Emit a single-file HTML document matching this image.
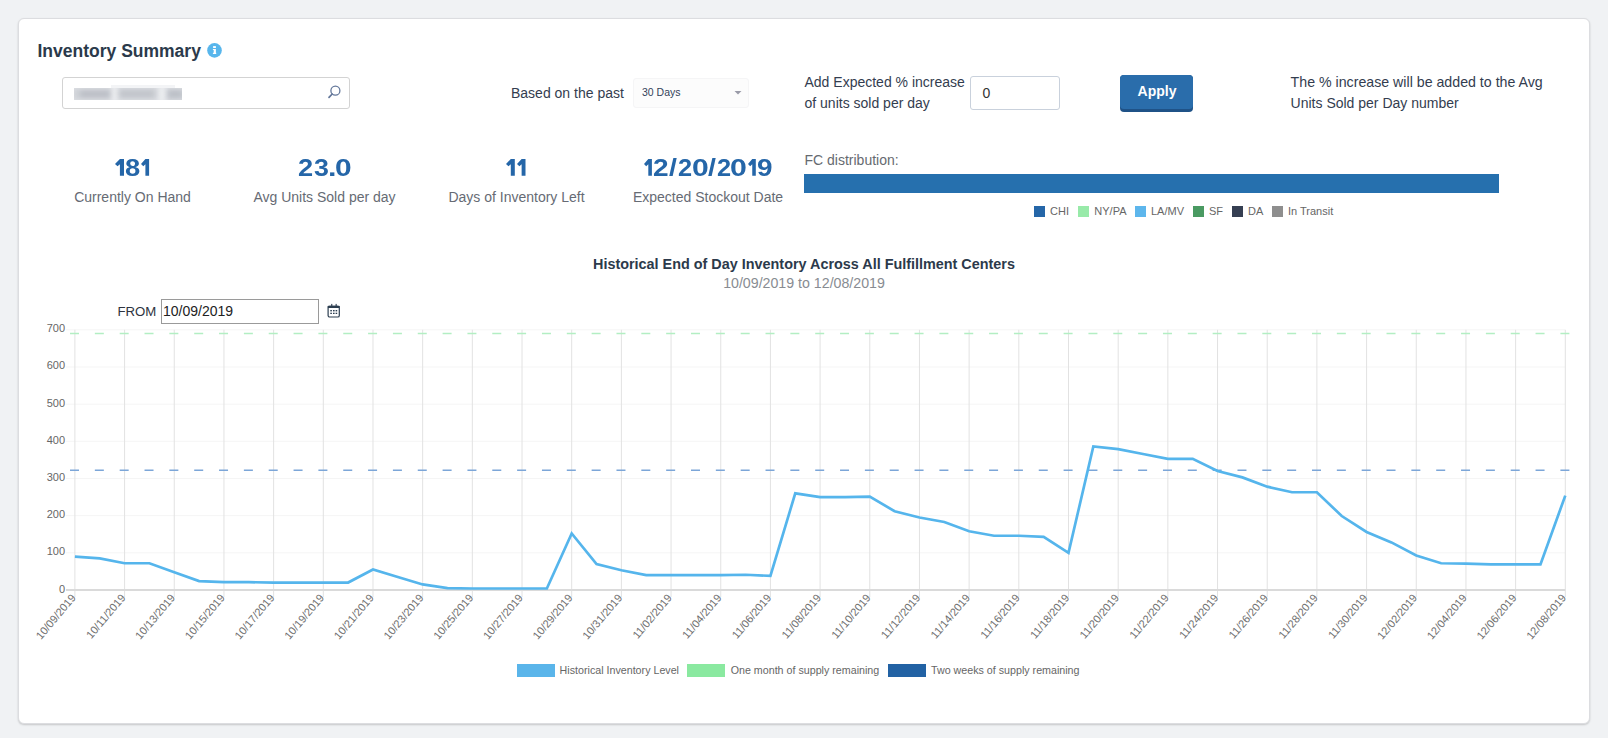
<!DOCTYPE html>
<html><head><meta charset="utf-8"><style>
html,body{margin:0;padding:0;}
body{width:1608px;height:738px;overflow:hidden;background:#f0f2f4;font-family:"Liberation Sans",sans-serif;position:relative;}
.card{position:absolute;left:18px;top:18px;width:1570px;height:704px;background:#fff;border:1px solid #dcdde0;border-radius:6px;box-shadow:0 1px 2px rgba(0,0,0,0.18);}
.t{position:absolute;white-space:nowrap;}
</style></head><body>
<div class="card"></div>
<div class="t" style="left:37.50px;top:43.19px;font-size:17.5px;line-height:17.5px;color:#2b3a4b;font-weight:bold;">Inventory Summary</div>
<svg style="position:absolute;left:207px;top:42.8px" width="15" height="15"><circle cx="7.5" cy="7.4" r="7.3" fill="#58b6ec"/><g fill="#fff"><rect x="6.1" y="3.1" width="2.8" height="1.9"/><path d="M5.9 5.9h3v3.9h0.3v1.3H5.9V9.8h0.8V7.0h-0.8z"/></g></svg><div style="position:absolute;left:62px;top:77px;width:286px;height:30px;border:1px solid #d3d3d3;border-radius:3px;background:#fff;"></div><div style="position:absolute;left:74px;top:88px;width:108px;height:12px;overflow:hidden;background:#e2e4e8;"><div style="position:absolute;left:-6px;top:-6px;width:120px;height:24px;filter:blur(2.5px);"><span style="position:absolute;left:4px;top:6px;width:40px;height:12px;background:#d0d3d8"></span><span style="position:absolute;left:12px;top:8px;width:30px;height:8px;background:#bdc0c7"></span><span style="position:absolute;left:48px;top:5px;width:42px;height:13px;background:#d2d5da"></span><span style="position:absolute;left:52px;top:8px;width:34px;height:8px;background:#c2c5cb"></span><span style="position:absolute;left:98px;top:6px;width:22px;height:13px;background:#d0d3d8"></span><span style="position:absolute;left:100px;top:8px;width:14px;height:8px;background:#bcc0c7"></span><span style="position:absolute;left:44px;top:4px;width:5px;height:16px;background:#f0f1f3"></span><span style="position:absolute;left:91px;top:4px;width:6px;height:16px;background:#eceef0"></span></div></div><div style="position:absolute;left:111px;top:85px;width:64px;height:3px;overflow:hidden;background:#f3f4f6;filter:blur(0.6px)"></div><svg style="position:absolute;left:326px;top:83px" width="18" height="18"><circle cx="9.4" cy="7.7" r="4.5" fill="none" stroke="#63779a" stroke-width="1.3"/><path d="M6.2 11 L3 14.4" stroke="#63779a" stroke-width="1.7" stroke-linecap="round"/></svg><div class="t" style="left:511.00px;top:85.95px;font-size:14px;line-height:14px;color:#333d4f;font-weight:normal;">Based on the past</div>
<div style="position:absolute;left:633px;top:78px;width:114px;height:28px;border:1px solid #f5f5f6;border-radius:3px;background:#fcfcfc;"></div><div class="t" style="left:642.00px;top:86.81px;font-size:10.5px;line-height:10.5px;color:#33435a;font-weight:normal;">30 Days</div>
<svg style="position:absolute;left:733px;top:90px" width="10" height="6"><path d="M1.5 1 L8.5 1 L5 4.5z" fill="#9a9ba8"/></svg><div class="t" style="left:804.50px;top:75.15px;font-size:14px;line-height:14px;color:#333d4f;font-weight:normal;">Add Expected % increase</div>
<div class="t" style="left:804.50px;top:95.65px;font-size:14px;line-height:14px;color:#333d4f;font-weight:normal;">of units sold per day</div>
<div style="position:absolute;left:970px;top:76px;width:88px;height:32px;border:1px solid #c9d1dc;border-radius:3px;background:#fff;"></div><div class="t" style="left:982.40px;top:86.15px;font-size:14px;line-height:14px;color:#333;font-weight:normal;">0</div>
<div style="position:absolute;left:1120px;top:75px;width:73px;height:37px;border-radius:4px;background:#1f5287;"></div><div style="position:absolute;left:1120px;top:75px;width:73px;height:34px;border-radius:4px;background:#2a6dab;"></div><div class="t" style="left:657.00px;width:1000px;text-align:center;top:84.25px;font-size:14px;line-height:14px;color:#ffffff;font-weight:bold;">Apply</div>
<div class="t" style="left:1290.60px;top:74.98px;font-size:14.2px;line-height:14.2px;color:#333d4f;font-weight:normal;">The % increase will be added to the Avg</div>
<div class="t" style="left:1290.60px;top:95.65px;font-size:14px;line-height:14px;color:#333d4f;font-weight:normal;">Units Sold per Day number</div>
<svg style="position:absolute;left:115.00px;top:159.00px" width="9.50" height="17.30"><polygon points="4.91,0 9.00,0 9.00,16.8 4.91,16.8 4.91,5.3 2.52,7.2 0,5.0" fill="#2566a8"/></svg><div class="t" style="left:125.03px;top:156.38px;font-size:24px;line-height:24px;font-weight:bold;color:#2566a8;transform-origin:0 0;transform:scaleX(1.139)">8</div><svg style="position:absolute;left:141.00px;top:159.00px" width="8.60" height="17.30"><polygon points="4.41,0 8.10,0 8.10,16.8 4.41,16.8 4.41,5.3 2.27,7.2 0,5.0" fill="#2566a8"/></svg>
<div class="t" style="left:298.26px;top:156.38px;font-size:24px;line-height:24px;font-weight:bold;color:#2566a8;transform-origin:0 0;transform:scaleX(1.134)">2</div><div class="t" style="left:313.59px;top:156.38px;font-size:24px;line-height:24px;font-weight:bold;color:#2566a8;transform-origin:0 0;transform:scaleX(1.115)">3</div><div class="t" style="left:327.53px;top:156.38px;font-size:24px;line-height:24px;font-weight:bold;color:#2566a8;transform-origin:0 0;transform:scaleX(1.270)">.</div><div class="t" style="left:334.62px;top:156.38px;font-size:24px;line-height:24px;font-weight:bold;color:#2566a8;transform-origin:0 0;transform:scaleX(1.244)">0</div>
<svg style="position:absolute;left:506.10px;top:159.00px" width="9.30" height="17.30"><polygon points="4.80,0 8.80,0 8.80,16.8 4.80,16.8 4.80,5.3 2.46,7.2 0,5.0" fill="#2566a8"/></svg><svg style="position:absolute;left:516.60px;top:159.00px" width="9.00" height="17.30"><polygon points="4.63,0 8.50,0 8.50,16.8 4.63,16.8 4.63,5.3 2.38,7.2 0,5.0" fill="#2566a8"/></svg>
<svg style="position:absolute;left:643.90px;top:159.00px" width="8.40" height="17.30"><polygon points="4.31,0 7.90,0 7.90,16.8 4.31,16.8 4.31,5.3 2.21,7.2 0,5.0" fill="#2566a8"/></svg><div class="t" style="left:653.43px;top:156.38px;font-size:24px;line-height:24px;font-weight:bold;color:#2566a8;transform-origin:0 0;transform:scaleX(1.168)">2</div><div class="t" style="left:668.92px;top:156.38px;font-size:24px;line-height:24px;font-weight:bold;color:#2566a8;transform-origin:0 0;transform:scaleX(1.194)">/</div><div class="t" style="left:677.82px;top:156.38px;font-size:24px;line-height:24px;font-weight:bold;color:#2566a8;transform-origin:0 0;transform:scaleX(1.056)">2</div><div class="t" style="left:691.51px;top:156.38px;font-size:24px;line-height:24px;font-weight:bold;color:#2566a8;transform-origin:0 0;transform:scaleX(1.253)">0</div><div class="t" style="left:708.02px;top:156.38px;font-size:24px;line-height:24px;font-weight:bold;color:#2566a8;transform-origin:0 0;transform:scaleX(1.194)">/</div><div class="t" style="left:716.62px;top:156.38px;font-size:24px;line-height:24px;font-weight:bold;color:#2566a8;transform-origin:0 0;transform:scaleX(1.056)">2</div><div class="t" style="left:730.20px;top:156.38px;font-size:24px;line-height:24px;font-weight:bold;color:#2566a8;transform-origin:0 0;transform:scaleX(1.262)">0</div><svg style="position:absolute;left:748.00px;top:159.00px" width="8.30" height="17.30"><polygon points="4.25,0 7.80,0 7.80,16.8 4.25,16.8 4.25,5.3 2.18,7.2 0,5.0" fill="#2566a8"/></svg><div class="t" style="left:757.43px;top:156.38px;font-size:24px;line-height:24px;font-weight:bold;color:#2566a8;transform-origin:0 0;transform:scaleX(1.161)">9</div>
<div class="t" style="left:-367.50px;width:1000px;text-align:center;top:190.35px;font-size:14px;line-height:14px;color:#666b74;font-weight:normal;">Currently On Hand</div>
<div class="t" style="left:-175.50px;width:1000px;text-align:center;top:190.35px;font-size:14px;line-height:14px;color:#666b74;font-weight:normal;">Avg Units Sold per day</div>
<div class="t" style="left:16.50px;width:1000px;text-align:center;top:190.35px;font-size:14px;line-height:14px;color:#666b74;font-weight:normal;">Days of Inventory Left</div>
<div class="t" style="left:208.00px;width:1000px;text-align:center;top:190.35px;font-size:14px;line-height:14px;color:#666b74;font-weight:normal;">Expected Stockout Date</div>
<div class="t" style="left:804.50px;top:153.15px;font-size:14px;line-height:14px;color:#666a70;font-weight:normal;">FC distribution:</div>
<div style="position:absolute;left:804px;top:174px;width:695px;height:19px;background:#2670ae;"></div><div style="position:absolute;left:1034px;top:206px;width:11px;height:11px;background:#2566a8;"></div><div class="t" style="left:1050.00px;top:205.69px;font-size:11px;line-height:11px;color:#666;font-weight:normal;">CHI</div>
<div style="position:absolute;left:1078px;top:206px;width:11px;height:11px;background:#98eaa9;"></div><div class="t" style="left:1094.30px;top:205.69px;font-size:11px;line-height:11px;color:#666;font-weight:normal;">NY/PA</div>
<div style="position:absolute;left:1135px;top:206px;width:11px;height:11px;background:#5db6ec;"></div><div class="t" style="left:1151.00px;top:205.69px;font-size:11px;line-height:11px;color:#666;font-weight:normal;">LA/MV</div>
<div style="position:absolute;left:1192.5px;top:206px;width:11px;height:11px;background:#4a9a62;"></div><div class="t" style="left:1209.00px;top:205.69px;font-size:11px;line-height:11px;color:#666;font-weight:normal;">SF</div>
<div style="position:absolute;left:1231.5px;top:206px;width:11px;height:11px;background:#353f52;"></div><div class="t" style="left:1248.00px;top:205.69px;font-size:11px;line-height:11px;color:#666;font-weight:normal;">DA</div>
<div style="position:absolute;left:1271.7px;top:206px;width:11px;height:11px;background:#8e8e8e;"></div><div class="t" style="left:1288.00px;top:205.69px;font-size:11px;line-height:11px;color:#666;font-weight:normal;">In Transit</div>
<div class="t" style="left:304.00px;width:1000px;text-align:center;top:257.11px;font-size:14.4px;line-height:14.4px;color:#2c3a4b;font-weight:bold;">Historical End of Day Inventory Across All Fulfillment Centers</div>
<div class="t" style="left:304.00px;width:1000px;text-align:center;top:276.48px;font-size:14.2px;line-height:14.2px;color:#888c92;font-weight:normal;">10/09/2019 to 12/08/2019</div>
<div class="t" style="left:117.50px;top:305.33px;font-size:13.2px;line-height:13.2px;color:#2d3340;font-weight:normal;">FROM</div>
<div style="position:absolute;left:161px;top:299px;width:156px;height:23px;border:1px solid #9a9a9a;background:#fff;"></div><div class="t" style="left:163.00px;top:304.15px;font-size:14px;line-height:14px;color:#222;font-weight:normal;">10/09/2019</div>
<svg style="position:absolute;left:326px;top:302px" width="16" height="17"><rect x="2.1" y="4.4" width="11.2" height="10.6" rx="1.6" fill="none" stroke="#2c3e50" stroke-width="1.2"/><rect x="1.5" y="3.8" width="12.4" height="2.3" rx="1" fill="#2c3e50"/><rect x="5.2" y="1.9" width="1.1" height="2.4" fill="#2c3e50"/><rect x="9.6" y="1.9" width="1.1" height="2.4" fill="#2c3e50"/><g fill="#2c3e50"><rect x="4.3" y="8.0" width="1.6" height="1.4"/><rect x="7.0" y="8.0" width="1.6" height="1.4"/><rect x="9.6" y="8.0" width="1.6" height="1.4"/><rect x="4.3" y="10.7" width="1.6" height="1.3"/><rect x="7.0" y="10.7" width="1.6" height="1.3"/><rect x="9.6" y="10.7" width="1.6" height="1.3"/></g></svg><svg style="position:absolute;left:0;top:0" width="1608" height="738" font-family="Liberation Sans, sans-serif"><line x1="66" y1="552.83" x2="1565.30" y2="552.83" stroke="#f5f5f5" stroke-width="1"/><line x1="66" y1="515.66" x2="1565.30" y2="515.66" stroke="#f5f5f5" stroke-width="1"/><line x1="66" y1="478.49" x2="1565.30" y2="478.49" stroke="#f5f5f5" stroke-width="1"/><line x1="66" y1="441.32" x2="1565.30" y2="441.32" stroke="#f5f5f5" stroke-width="1"/><line x1="66" y1="404.15" x2="1565.30" y2="404.15" stroke="#f5f5f5" stroke-width="1"/><line x1="66" y1="366.98" x2="1565.30" y2="366.98" stroke="#f5f5f5" stroke-width="1"/><line x1="66" y1="329.81" x2="1565.30" y2="329.81" stroke="#f5f5f5" stroke-width="1"/><line x1="74.90" y1="329.81" x2="74.90" y2="597" stroke="#e2e2e2" stroke-width="1"/><line x1="124.58" y1="329.81" x2="124.58" y2="597" stroke="#e2e2e2" stroke-width="1"/><line x1="174.26" y1="329.81" x2="174.26" y2="597" stroke="#e2e2e2" stroke-width="1"/><line x1="223.94" y1="329.81" x2="223.94" y2="597" stroke="#e2e2e2" stroke-width="1"/><line x1="273.62" y1="329.81" x2="273.62" y2="597" stroke="#e2e2e2" stroke-width="1"/><line x1="323.30" y1="329.81" x2="323.30" y2="597" stroke="#e2e2e2" stroke-width="1"/><line x1="372.98" y1="329.81" x2="372.98" y2="597" stroke="#e2e2e2" stroke-width="1"/><line x1="422.66" y1="329.81" x2="422.66" y2="597" stroke="#e2e2e2" stroke-width="1"/><line x1="472.34" y1="329.81" x2="472.34" y2="597" stroke="#e2e2e2" stroke-width="1"/><line x1="522.02" y1="329.81" x2="522.02" y2="597" stroke="#e2e2e2" stroke-width="1"/><line x1="571.70" y1="329.81" x2="571.70" y2="597" stroke="#e2e2e2" stroke-width="1"/><line x1="621.38" y1="329.81" x2="621.38" y2="597" stroke="#e2e2e2" stroke-width="1"/><line x1="671.06" y1="329.81" x2="671.06" y2="597" stroke="#e2e2e2" stroke-width="1"/><line x1="720.74" y1="329.81" x2="720.74" y2="597" stroke="#e2e2e2" stroke-width="1"/><line x1="770.42" y1="329.81" x2="770.42" y2="597" stroke="#e2e2e2" stroke-width="1"/><line x1="820.10" y1="329.81" x2="820.10" y2="597" stroke="#e2e2e2" stroke-width="1"/><line x1="869.78" y1="329.81" x2="869.78" y2="597" stroke="#e2e2e2" stroke-width="1"/><line x1="919.46" y1="329.81" x2="919.46" y2="597" stroke="#e2e2e2" stroke-width="1"/><line x1="969.14" y1="329.81" x2="969.14" y2="597" stroke="#e2e2e2" stroke-width="1"/><line x1="1018.82" y1="329.81" x2="1018.82" y2="597" stroke="#e2e2e2" stroke-width="1"/><line x1="1068.50" y1="329.81" x2="1068.50" y2="597" stroke="#e2e2e2" stroke-width="1"/><line x1="1118.18" y1="329.81" x2="1118.18" y2="597" stroke="#e2e2e2" stroke-width="1"/><line x1="1167.86" y1="329.81" x2="1167.86" y2="597" stroke="#e2e2e2" stroke-width="1"/><line x1="1217.54" y1="329.81" x2="1217.54" y2="597" stroke="#e2e2e2" stroke-width="1"/><line x1="1267.22" y1="329.81" x2="1267.22" y2="597" stroke="#e2e2e2" stroke-width="1"/><line x1="1316.90" y1="329.81" x2="1316.90" y2="597" stroke="#e2e2e2" stroke-width="1"/><line x1="1366.58" y1="329.81" x2="1366.58" y2="597" stroke="#e2e2e2" stroke-width="1"/><line x1="1416.26" y1="329.81" x2="1416.26" y2="597" stroke="#e2e2e2" stroke-width="1"/><line x1="1465.94" y1="329.81" x2="1465.94" y2="597" stroke="#e2e2e2" stroke-width="1"/><line x1="1515.62" y1="329.81" x2="1515.62" y2="597" stroke="#e2e2e2" stroke-width="1"/><line x1="1565.30" y1="329.81" x2="1565.30" y2="597" stroke="#e2e2e2" stroke-width="1"/><line x1="66" y1="590.0" x2="1565.30" y2="590.0" stroke="#dadada" stroke-width="2"/><text x="65" y="592.50" text-anchor="end" font-size="11" fill="#666">0</text><text x="65" y="555.33" text-anchor="end" font-size="11" fill="#666">100</text><text x="65" y="518.16" text-anchor="end" font-size="11" fill="#666">200</text><text x="65" y="480.99" text-anchor="end" font-size="11" fill="#666">300</text><text x="65" y="443.82" text-anchor="end" font-size="11" fill="#666">400</text><text x="65" y="406.65" text-anchor="end" font-size="11" fill="#666">500</text><text x="65" y="369.48" text-anchor="end" font-size="11" fill="#666">600</text><text x="65" y="332.31" text-anchor="end" font-size="11" fill="#666">700</text><text transform="translate(76.40,598) rotate(-50)" text-anchor="end" font-size="11" fill="#6e6e6e">10/09/2019</text><text transform="translate(126.08,598) rotate(-50)" text-anchor="end" font-size="11" fill="#6e6e6e">10/11/2019</text><text transform="translate(175.76,598) rotate(-50)" text-anchor="end" font-size="11" fill="#6e6e6e">10/13/2019</text><text transform="translate(225.44,598) rotate(-50)" text-anchor="end" font-size="11" fill="#6e6e6e">10/15/2019</text><text transform="translate(275.12,598) rotate(-50)" text-anchor="end" font-size="11" fill="#6e6e6e">10/17/2019</text><text transform="translate(324.80,598) rotate(-50)" text-anchor="end" font-size="11" fill="#6e6e6e">10/19/2019</text><text transform="translate(374.48,598) rotate(-50)" text-anchor="end" font-size="11" fill="#6e6e6e">10/21/2019</text><text transform="translate(424.16,598) rotate(-50)" text-anchor="end" font-size="11" fill="#6e6e6e">10/23/2019</text><text transform="translate(473.84,598) rotate(-50)" text-anchor="end" font-size="11" fill="#6e6e6e">10/25/2019</text><text transform="translate(523.52,598) rotate(-50)" text-anchor="end" font-size="11" fill="#6e6e6e">10/27/2019</text><text transform="translate(573.20,598) rotate(-50)" text-anchor="end" font-size="11" fill="#6e6e6e">10/29/2019</text><text transform="translate(622.88,598) rotate(-50)" text-anchor="end" font-size="11" fill="#6e6e6e">10/31/2019</text><text transform="translate(672.56,598) rotate(-50)" text-anchor="end" font-size="11" fill="#6e6e6e">11/02/2019</text><text transform="translate(722.24,598) rotate(-50)" text-anchor="end" font-size="11" fill="#6e6e6e">11/04/2019</text><text transform="translate(771.92,598) rotate(-50)" text-anchor="end" font-size="11" fill="#6e6e6e">11/06/2019</text><text transform="translate(821.60,598) rotate(-50)" text-anchor="end" font-size="11" fill="#6e6e6e">11/08/2019</text><text transform="translate(871.28,598) rotate(-50)" text-anchor="end" font-size="11" fill="#6e6e6e">11/10/2019</text><text transform="translate(920.96,598) rotate(-50)" text-anchor="end" font-size="11" fill="#6e6e6e">11/12/2019</text><text transform="translate(970.64,598) rotate(-50)" text-anchor="end" font-size="11" fill="#6e6e6e">11/14/2019</text><text transform="translate(1020.32,598) rotate(-50)" text-anchor="end" font-size="11" fill="#6e6e6e">11/16/2019</text><text transform="translate(1070.00,598) rotate(-50)" text-anchor="end" font-size="11" fill="#6e6e6e">11/18/2019</text><text transform="translate(1119.68,598) rotate(-50)" text-anchor="end" font-size="11" fill="#6e6e6e">11/20/2019</text><text transform="translate(1169.36,598) rotate(-50)" text-anchor="end" font-size="11" fill="#6e6e6e">11/22/2019</text><text transform="translate(1219.04,598) rotate(-50)" text-anchor="end" font-size="11" fill="#6e6e6e">11/24/2019</text><text transform="translate(1268.72,598) rotate(-50)" text-anchor="end" font-size="11" fill="#6e6e6e">11/26/2019</text><text transform="translate(1318.40,598) rotate(-50)" text-anchor="end" font-size="11" fill="#6e6e6e">11/28/2019</text><text transform="translate(1368.08,598) rotate(-50)" text-anchor="end" font-size="11" fill="#6e6e6e">11/30/2019</text><text transform="translate(1417.76,598) rotate(-50)" text-anchor="end" font-size="11" fill="#6e6e6e">12/02/2019</text><text transform="translate(1467.44,598) rotate(-50)" text-anchor="end" font-size="11" fill="#6e6e6e">12/04/2019</text><text transform="translate(1517.12,598) rotate(-50)" text-anchor="end" font-size="11" fill="#6e6e6e">12/06/2019</text><text transform="translate(1566.80,598) rotate(-50)" text-anchor="end" font-size="11" fill="#6e6e6e">12/08/2019</text><line x1="70" y1="333.53" x2="1570" y2="333.53" stroke="#b3eec3" stroke-width="1.5" stroke-dasharray="9 15.84"/><line x1="70" y1="470.31" x2="1570" y2="470.31" stroke="#7ca6d8" stroke-width="1.6" stroke-dasharray="9 15.84"/><polyline points="74.90,556.55 99.74,558.41 124.58,563.24 149.42,563.24 174.26,572.16 199.10,581.08 223.94,582.19 248.78,582.19 273.62,582.57 298.46,582.57 323.30,582.57 348.14,582.57 372.98,569.56 397.82,576.99 422.66,584.42 447.50,588.14 472.34,588.51 497.18,588.51 522.02,588.51 546.86,588.51 571.70,533.50 596.54,563.98 621.38,570.30 646.22,575.13 671.06,575.13 695.90,575.13 720.74,575.13 745.58,574.76 770.42,575.88 795.26,493.36 820.10,497.07 844.94,497.07 869.78,496.70 894.62,511.20 919.46,517.52 944.30,521.98 969.14,531.27 993.98,535.73 1018.82,535.73 1043.66,536.85 1068.50,552.83 1093.34,446.52 1118.18,449.13 1143.02,453.96 1167.86,458.79 1192.70,458.79 1217.54,471.06 1242.38,477.37 1267.22,486.67 1292.06,492.24 1316.90,492.24 1341.74,516.03 1366.58,532.01 1391.42,542.42 1416.26,555.43 1441.10,563.24 1465.94,563.61 1490.78,564.35 1515.62,564.35 1540.46,564.35 1565.30,495.59" fill="none" stroke="#55b5ec" stroke-width="2.7" stroke-linejoin="miter"/></svg><div style="position:absolute;left:516.6px;top:664px;width:38px;height:13px;background:#5ab5ea;"></div><div class="t" style="left:559.60px;top:665.44px;font-size:10.7px;line-height:10.7px;color:#666;font-weight:normal;">Historical Inventory Level</div>
<div style="position:absolute;left:687.4px;top:664px;width:38px;height:13px;background:#8ae9a0;"></div><div class="t" style="left:730.70px;top:665.44px;font-size:10.7px;line-height:10.7px;color:#666;font-weight:normal;">One month of supply remaining</div>
<div style="position:absolute;left:888px;top:664px;width:38px;height:13px;background:#2262a4;"></div><div class="t" style="left:931.00px;top:665.44px;font-size:10.7px;line-height:10.7px;color:#666;font-weight:normal;">Two weeks of supply remaining</div>

</body></html>
